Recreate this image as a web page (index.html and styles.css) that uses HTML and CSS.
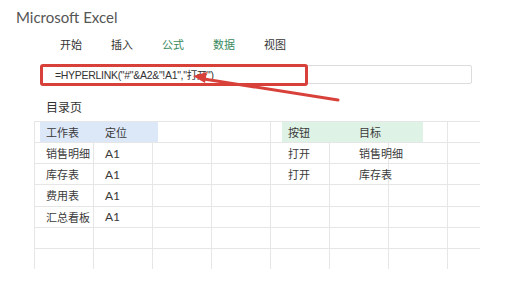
FILE: index.html
```html
<!DOCTYPE html>
<html lang="zh-CN">

<head>
    <meta charset="UTF-8">
    <meta name="viewport" content="width=device-width, initial-scale=1.0">
    <title>Microsoft Excel</title>
    <link rel="stylesheet" href="styles.css">
</head>

<body>
    <div class="page">
        <!-- Title -->
        <div class="app-title">Microsoft Excel</div>

        <!-- Ribbon tabs -->
        <ul class="tabs">
            <li>开始</li>
            <li>插入</li>
            <li class="green">公式</li>
            <li class="green">数据</li>
            <li>视图</li>
        </ul>

        <!-- Formula bar -->
        <div class="formula-bar">
            <span class="formula">=HYPERLINK("#"&amp;A2&amp;"!A1","打开")</span>
            <div class="highlight-box"></div>
        </div>

        <div class="sheet-name">目录页</div>

        <!-- Sheet grid -->
        <div class="grid">
            <div class="band blue">
                <span class="b1">工作表</span>
                <span class="b2">定位</span>
            </div>
            <div class="band green">
                <span class="g1">按钮</span>
                <span class="g2">目标</span>
            </div>

            <div class="cell c1 r2">销售明细</div>
            <div class="cell c2 r2">A1</div>
            <div class="cell c5 r2">打开</div>
            <div class="cell c6 r2">销售明细</div>

            <div class="cell c1 r3">库存表</div>
            <div class="cell c2 r3">A1</div>
            <div class="cell c5 r3">打开</div>
            <div class="cell c6 r3">库存表</div>

            <div class="cell c1 r4">费用表</div>
            <div class="cell c2 r4">A1</div>

            <div class="cell c1 r5">汇总看板</div>
            <div class="cell c2 r5">A1</div>
        </div>

        <!-- Annotation arrow -->
        <svg class="arrow" width="515" height="294" viewBox="0 0 515 294">
            <line x1="338" y1="100" x2="204" y2="79" stroke="#d8403a" stroke-width="3" stroke-linecap="round" />
            <polygon points="193,76 207,72 205,83" fill="#d8403a" />
        </svg>
    </div>
</body>

</html>
```

FILE: styles.css
```css
* {
    box-sizing: border-box;
    margin: 0;
    padding: 0;
}

body {
    font-family: "Noto Sans CJK SC", sans-serif;
    background-color: #fff;
    color: #333;
}

.page {
    position: relative;
    width: 515px;
    height: 294px;
    overflow: hidden;
}

.app-title {
    font-family: Lato, "Liberation Sans", sans-serif;
    font-size: 15px;
    color: #555;
    padding: 8px 0 0 16px;
    height: 32px;
}

.tabs {
    list-style-type: none;
    display: flex;
    padding-left: 60px;
    height: 24px;
    align-items: center;
    font-size: 11px;
}

.tabs li {
    width: 51px;
    line-height: 16px;
}

.tabs li.green {
    color: #3a8a5e;
}

.formula-bar {
    position: relative;
    margin: 9px 0 0 40px;
    width: 432px;
    height: 19px;
    border: 1px solid #dcdcdc;
    border-radius: 2px;
    padding-left: 14px;
    display: flex;
    align-items: center;
}

.formula {
    font-family: "Liberation Sans", "Noto Sans CJK SC", sans-serif;
    font-size: 10.5px;
    color: #333;
    letter-spacing: -0.3px;
}

.highlight-box {
    position: absolute;
    left: -1px;
    top: -2px;
    width: 268px;
    height: 22px;
    border: 3px solid #d8403a;
    border-radius: 3px;
}

.sheet-name {
    font-size: 12px;
    padding: 15px 0 0 46px;
    height: 37px;
    line-height: 16px;
}

.grid {
    display: grid;
    grid-template-columns: repeat(8, 59px);
    grid-template-rows: repeat(7, 21.15px);
    margin-left: 34px;
    width: 446px;
    height: 148px;
    font-size: 11px;
    color: #3a3a3a;
    background-image:
        repeating-linear-gradient(to right, #e6e6e6 0 1px, transparent 1px 59px),
        repeating-linear-gradient(to bottom, #e6e6e6 0 1px, transparent 1px 21.15px);
}

.band {
    grid-row: 1;
    display: flex;
    align-items: center;
    margin-top: 1px;
}

.band.blue {
    grid-column: 1 / 4;
    margin-left: 6px;
    width: 118px;
    background-color: #dce8f8;
}

.band.green {
    grid-column: 5 / 8;
    margin-left: 12px;
    width: 141px;
    background-color: #dff2e6;
}

.b1 {
    padding-left: 6px;
    width: 65px;
}

.g1 {
    padding-left: 6px;
    width: 77px;
}

.cell {
    display: flex;
    align-items: center;
    white-space: nowrap;
    padding-top: 1px;
}

.c1 { grid-column: 1; padding-left: 12px; }
.c2 { grid-column: 2; padding-left: 12px; font-family: Lato, "Liberation Sans", sans-serif; font-size: 12px; }
.c5 { grid-column: 5; padding-left: 18px; }
.c6 { grid-column: 6 / 8; padding-left: 30px; }

.r2 { grid-row: 2; }
.r3 { grid-row: 3; }
.r4 { grid-row: 4; }
.r5 { grid-row: 5; }

.arrow {
    position: absolute;
    left: 0;
    top: 0;
    pointer-events: none;
}
```
